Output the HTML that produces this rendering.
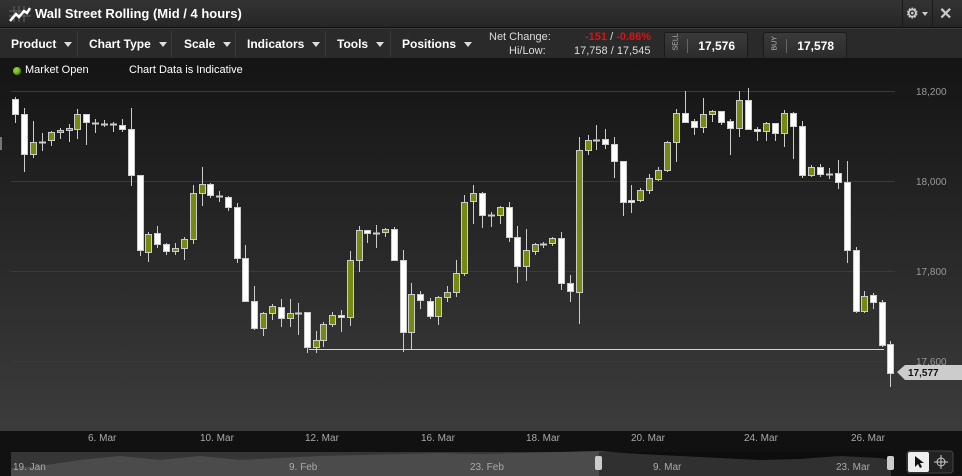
<!DOCTYPE html>
<html><head><meta charset="utf-8"><style>
*{margin:0;padding:0;box-sizing:border-box}
body{width:962px;height:476px;overflow:hidden;background:#111;font-family:"Liberation Sans",sans-serif;position:relative}
.title{position:absolute;left:0;top:0;width:962px;height:28px;background:linear-gradient(#333,#262626);border-bottom:1px solid #111}
.title span{position:absolute;left:35px;top:6px;color:#fff;font-size:13px;font-weight:bold}
.tb{position:absolute;left:0;top:28px;width:962px;height:30px;background:#2a2a2a;border-top:1px solid #3a3a3a}
.m{position:absolute;top:8px;color:#fff;font-size:12px;font-weight:bold}
.m:after{content:"";position:absolute;right:-16px;top:5px;border:4px solid transparent;border-top:5px solid #ddd}
.sep{position:absolute;top:2px;width:1px;height:26px;background:#1a1a1a;border-right:1px solid #3a3a3a}
.lbl{position:absolute;font-size:11px;color:#ddd}
.btn{position:absolute;top:3px;height:27px;width:84px;background:linear-gradient(#3a3a3a,#2c2c2c);border:1px solid #1a1a1a;border-radius:3px}
.btn .s{position:absolute;left:4px;top:7px;font-size:7px;color:#bbb;transform:rotate(-90deg);transform-origin:center;width:14px;text-align:center}
.btn .v{position:absolute;right:12px;top:6px;color:#fff;font-size:12px;font-weight:bold}
.chart{position:absolute;left:0;top:58px;width:962px;height:374px;background:linear-gradient(#141414,#3c3c3c)}
.ax{position:absolute;left:0;top:431px;width:962px;height:17px;background:#111}
.ax span{position:absolute;top:2px;font-size:10px;color:#aaa}
.nav{position:absolute;left:11px;top:448px;width:880px;height:28px}
.nav span{position:absolute;top:14px;font-size:10px;color:#aaa}
</style></head><body>
<div class="title">
<svg style="position:absolute;left:9px;top:6px" width="22" height="16"><g stroke="#666" stroke-width="1" fill="none"><path d="M5 0V16M10 0V16M15 0V16M0 5H22M0 10H22"/></g><path d="M1 15L7 8L10 11L15 5L18 7L21 2" stroke="#fff" stroke-width="2.5" fill="none"/></svg>
<span>Wall Street Rolling (Mid / 4 hours)</span>
<div style="position:absolute;left:902px;top:0;width:1px;height:28px;background:#1a1a1a"></div>
<div style="position:absolute;left:932px;top:0;width:1px;height:28px;background:#1a1a1a"></div>
<span style="left:906px;top:5px;font-size:14px;color:#ccc">⚙</span>
<div style="position:absolute;left:922px;top:12px;border:3px solid transparent;border-top:4px solid #ccc"></div>
<span style="left:939px;top:4px;font-size:16px;color:#ccc">✕</span>
</div>
<div class="tb">
<span class="m" style="left:11px">Product</span><div class="sep" style="left:77px"></div>
<span class="m" style="left:89px">Chart Type</span><div class="sep" style="left:171px"></div>
<span class="m" style="left:184px">Scale</span><div class="sep" style="left:235px"></div>
<span class="m" style="left:247px">Indicators</span><div class="sep" style="left:325px"></div>
<span class="m" style="left:337px">Tools</span><div class="sep" style="left:390px"></div>
<span class="m" style="left:402px">Positions</span>
<span class="lbl" style="left:489px;top:2px">Net Change:</span>
<span class="lbl" style="left:509px;top:16px">Hi/Low:</span>
<span class="lbl" style="left:585px;top:2px;color:#e01010;font-weight:bold">-151 <span style="color:#ddd;font-weight:normal">/</span> -0.86%</span>
<span class="lbl" style="left:574px;top:16px">17,758 / 17,545</span>
<div class="btn" style="left:664px"><span class="s">SELL</span><div style="position:absolute;left:22px;top:6px;width:1px;height:14px;background:#666"></div><span class="v">17,576</span></div>
<div class="btn" style="left:763px"><span class="s">BUY</span><div style="position:absolute;left:22px;top:6px;width:1px;height:14px;background:#666"></div><span class="v">17,578</span></div>
</div>
<div class="chart">
<div style="position:absolute;left:13px;top:9px;width:8px;height:8px;border-radius:50%;background:#8c3;box-shadow:inset -1px -1px 2px #460"></div>
<span class="lbl" style="left:25px;top:6px;color:#fff;font-size:11px">Market Open</span>
<span class="lbl" style="left:129px;top:6px;color:#fff;font-size:11px">Chart Data is Indicative</span>
</div>
<svg id="sv" style="position:absolute;left:0;top:0" width="962" height="476">
<g stroke="#3a3a3a" stroke-width="1"><path d="M11 91.5H895M11 181.5H895M11 271.5H895M11 361.5H895"/></g>
<rect x="0" y="137" width="2" height="13" fill="#777"/>
<g fill="#999" font-size="10" font-family="Liberation Sans,sans-serif"><text x="916" y="95">18,200</text><text x="916" y="185">18,000</text><text x="916" y="275">17,800</text><text x="916" y="365">17,600</text></g>
<path d="M309 349.5H884" stroke="#f2e04a" stroke-width="1"/>
<g id="cd"></g>
<path d="M897 372L905 365H962V380H905Z" fill="#ccc"/>
<text x="908" y="376" font-size="10" font-weight="bold" fill="#111" font-family="Liberation Sans,sans-serif">17,577</text>
</svg>
<div class="ax">
<span style="left:88px">6. Mar</span><span style="left:200px">10. Mar</span><span style="left:305px">12. Mar</span><span style="left:421px">16. Mar</span><span style="left:526px">18. Mar</span><span style="left:631px">20. Mar</span><span style="left:744px">24. Mar</span><span style="left:851px">26. Mar</span>
</div>
<svg style="position:absolute;left:0;top:448px" width="962" height="28">
<rect x="11" y="4" width="588" height="24" fill="#363636"/>
<rect x="599" y="4" width="292" height="24" fill="#151515"/>
<path d="M11 28V20L40 18L80 12L120 8L160 12L200 8L240 12L280 10L320 8L360 7L400 6L440 5L480 6L520 5L560 4L599 3L640 6L680 8L720 10L760 12L800 11L840 8L880 10L891 12V28Z" fill="#4b4b4b"/>
<rect x="599" y="4" width="292" height="24" fill="#000" opacity=".35"/>
<rect x="595" y="8" width="7" height="14" rx="2" fill="#ccc"/><rect x="887" y="8" width="7" height="14" rx="2" fill="#ccc"/>
<rect x="907" y="3" width="46" height="22" rx="3" fill="#222" stroke="#444"/>
<rect x="908" y="4" width="21" height="20" rx="2" fill="#eee"/>
<path d="M915 8V19L918 16L920 20L922 19L920 15H924Z" fill="#111"/>
<g stroke="#ccc" fill="none"><circle cx="941" cy="14" r="4"/><path d="M941 7V21M934 14H948"/></g>
</svg>
<div class="nav"><span style="left:2px">19. Jan</span><span style="left:278px">9. Feb</span><span style="left:459px">23. Feb</span><span style="left:642px">9. Mar</span><span style="left:825px">23. Mar</span></div>
<script>
var d=[[15,99,114,97,123,'W'],[24,114,154,108,172,'W'],[33,142,154,121,158,'G'],[42,142,142,133,151,'D'],[51,132,140,131,146,'G'],[60,130,132,128,139,'G'],[69,128,130,124,142,'G'],[77,114,129,109,139,'G'],[86,114,122,114,145,'W'],[95,123,123,119,133,'D'],[104,124,124,120,127,'D'],[113,124,124,122,132,'D'],[122,125,129,119,132,'W'],[131,129,175,108,186,'W'],[140,175,250,175,256,'W'],[148,234,252,232,262,'G'],[157,233,244,226,248,'W'],[166,244,251,243,255,'W'],[175,248,251,243,255,'G'],[184,239,248,237,260,'G'],[193,193,239,185,244,'G'],[202,184,193,167,206,'G'],[210,184,195,183,198,'W'],[219,196,196,191,202,'D'],[228,197,207,196,211,'W'],[237,207,258,203,263,'W'],[245,258,301,245,301,'W'],[254,301,328,286,330,'W'],[263,313,328,312,336,'G'],[272,306,313,304,320,'G'],[281,307,318,299,327,'W'],[290,313,318,299,327,'G'],[298,313,313,303,335,'D'],[307,312,347,312,353,'W'],[316,340,347,331,353,'G'],[323,324,340,322,347,'G'],[332,315,324,312,327,'G'],[341,315,317,310,332,'W'],[350,260,317,251,326,'G'],[359,230,260,226,272,'G'],[367,230,233,230,243,'W'],[376,233,233,225,248,'D'],[385,229,232,228,237,'G'],[394,229,260,227,260,'W'],[403,260,332,250,352,'W'],[411,294,332,283,349,'G'],[420,294,300,291,309,'W'],[430,301,316,298,319,'W'],[438,297,316,296,325,'G'],[447,292,297,286,302,'G'],[456,273,292,260,297,'G'],[464,202,273,195,276,'G'],[473,193,201,185,224,'G'],[482,193,215,192,228,'W'],[491,215,215,212,227,'D'],[500,207,215,206,224,'G'],[509,207,237,202,242,'W'],[517,237,266,226,283,'W'],[526,250,266,229,281,'G'],[535,244,251,243,255,'G'],[543,244,244,242,248,'D'],[552,238,243,237,246,'G'],[561,238,283,232,290,'W'],[570,283,291,275,302,'W'],[579,150,292,137,324,'G'],[588,140,150,135,155,'G'],[596,140,140,125,150,'D'],[605,139,144,129,149,'W'],[614,144,161,137,178,'W'],[623,161,202,161,216,'W'],[631,200,202,185,213,'W'],[640,190,200,188,202,'G'],[649,178,190,174,194,'G'],[658,170,179,167,181,'G'],[667,142,170,141,172,'G'],[676,113,142,109,162,'G'],[685,113,122,91,122,'W'],[694,121,127,119,135,'W'],[703,114,127,98,133,'G'],[712,111,114,110,122,'G'],[721,111,122,111,125,'W'],[730,121,128,119,155,'W'],[739,100,128,91,137,'G'],[748,100,129,88,129,'W'],[757,129,131,127,141,'W'],[766,123,131,122,141,'G'],[775,123,133,123,141,'W'],[784,113,133,110,147,'G'],[793,113,126,112,159,'W'],[802,126,175,121,178,'W'],[811,167,175,165,177,'G'],[820,167,174,164,177,'W'],[829,174,174,168,179,'D'],[838,173,182,160,189,'W'],[847,182,250,161,263,'W'],[856,250,311,247,313,'W'],[864,296,311,291,313,'G'],[873,295,302,293,309,'W'],[882,302,345,300,347,'W'],[890,344,373,341,387,'W']];
var s='';d.forEach(function(c){var x=c[0];s+='<path d="M'+(x+.5)+' '+c[3]+'V'+c[4]+'" stroke="#ccc"/>';
if(c[5]=='D'){s+='<path d="M'+(x-3)+' '+(c[1]+.5)+'H'+(x+4)+'" stroke="#ccc" stroke-width="2"/>';}
else{var h=Math.max(c[2]-c[1],2);s+='<rect x="'+(x-2.5)+'" y="'+(c[1]+.5)+'" width="6" height="'+h+'" fill="'+(c[5]=='G'?'#768a12':'#fff')+'" stroke="#ccc"/>';}});
document.getElementById('cd').innerHTML=s;
</script>
</body></html>
